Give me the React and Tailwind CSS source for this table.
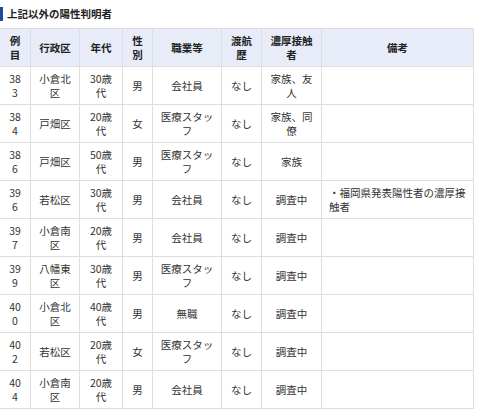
const rows = [
  ['383', '小倉北区', '30歳代', '男', '会社員', 'なし', '家族、友人', ''],
  ['384', '戸畑区', '20歳代', '女', '医療スタッフ', 'なし', '家族、同僚', ''],
  ['386', '戸畑区', '50歳代', '男', '医療スタッフ', 'なし', '家族', ''],
  ['396', '若松区', '30歳代', '男', '会社員', 'なし', '調査中', '・福岡県発表陽性者の濃厚接触者'],
  ['397', '小倉南区', '20歳代', '男', '会社員', 'なし', '調査中', ''],
  ['399', '八幡東区', '30歳代', '男', '医療スタッフ', 'なし', '調査中', ''],
  ['400', '小倉北区', '40歳代', '男', '無職', 'なし', '調査中', ''],
  ['402', '若松区', '20歳代', '女', '医療スタッフ', 'なし', '調査中', ''],
  ['404', '小倉南区', '20歳代', '男', '会社員', 'なし', '調査中', ''],
];

const heads = ['例目', '行政区', '年代', '性別', '職業等', '渡航歴', '濃厚接触者', '備考'];
const widths = ['w-[31px]', 'w-[49px]', 'w-[43px]', 'w-[30px]', 'w-[69px]', 'w-[40px]', 'w-[60px]', 'w-[152px]'];

export default function App() {
  return (
    <div className="bg-white w-[480px] h-[409px] overflow-hidden font-['Noto_Sans_CJK_JP',sans-serif] text-[10.5px] leading-[14px] text-[#333]">
      <h2 className="mt-[7px] h-[14px] flex items-center border-l-[3px] border-[#1d4e9e] pl-[4px] font-bold text-[#222]">
        上記以外の陽性判明者
      </h2>
      <table className="mt-[7px] -ml-px w-[475px] table-fixed border-collapse">
        <colgroup>
          {widths.map((w, i) => (
            <col key={i} className={w} />
          ))}
        </colgroup>
        <thead>
          <tr className="bg-[#e7ecf8] h-[38px]">
            {heads.map((h) => (
              <th key={h} className="border border-[#dedede] px-[7px] py-[4px] font-bold text-[#222] text-center break-all">
                {h}
              </th>
            ))}
          </tr>
        </thead>
        <tbody>
          {rows.map((r) => (
            <tr key={r[0]} className="h-[38px]">
              {r.map((c, i) => (
                <td
                  key={i}
                  className={
                    'border border-[#dedede] px-[7px] py-[4px] break-all ' +
                    (i === 7 ? 'text-left' : 'text-center')
                  }
                >
                  {c}
                </td>
              ))}
            </tr>
          ))}
        </tbody>
      </table>
    </div>
  );
}
